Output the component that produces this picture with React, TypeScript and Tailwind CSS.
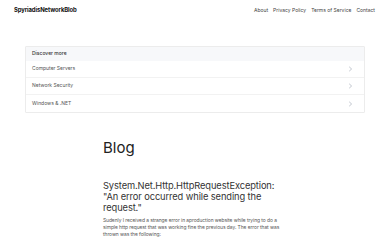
import React from 'react';

const links = ['About', 'Privacy Policy', 'Terms of Service', 'Contact'];
const topics = ['Computer Servers', 'Network Security', 'Windows & .NET'];

const Chevron = () => (
  <svg width="5" height="6" viewBox="0 0 5 6" fill="none" className="text-gray-400">
    <path d="M1.2 0.8L3.6 3L1.2 5.2" stroke="currentColor" strokeWidth="0.6" />
  </svg>
);

const App = () => {
  return (
    <div className="w-[390px] h-[240px] overflow-hidden bg-white text-[#222]" style={{ fontFamily: 'Inter, "Noto Sans", sans-serif' }}>
      {/* Header */}
      <div className="flex items-center justify-between h-[21px] pl-[14px] pr-[15px]">
        <span className="text-[5.9px] font-bold tracking-[-0.1px] text-[#111]">SpyriadisNetworkBlob</span>
        <nav className="flex gap-[5px] text-[5px] text-[#444]">
          {links.map((l) => (
            <span key={l}>{l}</span>
          ))}
        </nav>
      </div>

      {/* Discover more */}
      <div className="mx-[25px] mt-[25px] border border-[#ececec] rounded-[1px]">
        <div className="h-[14px] bg-[#f7f8fa] flex items-center px-[6px] text-[5px] font-medium text-[#333]">
          Discover more
        </div>
        {topics.map((t, i) => (
          <div
            key={t}
            className={`h-[17px] flex items-center justify-between pl-[6px] pr-[11px] text-[5px] text-[#555] ${i < topics.length - 1 ? 'border-b border-[#f2f2f2]' : ''}`}
          >
            <span>{t}</span>
            <Chevron />
          </div>
        ))}
      </div>

      {/* Blog */}
      <main className="pl-[103px] pr-[105px]">
        <h1 className="mt-[26px] text-[15px] leading-[18px] text-[#222]">Blog</h1>
        <h2 className="mt-[23px] text-[9.3px] leading-[11.2px] text-[#333] tracking-[-0.1px]">
          System.Net.Http.HttpRequestException: "An error occurred while sending the request."
        </h2>
        <p className="mt-[3.5px] text-[4.9px] leading-[7.1px] text-[#555] tracking-[-0.05px]">
          Sudenly I received a strange error in aproduction website while trying to do a simple http request that was working fine the previous day. The error that was thrown was the following:
        </p>
      </main>
    </div>
  );
};

export default App;
